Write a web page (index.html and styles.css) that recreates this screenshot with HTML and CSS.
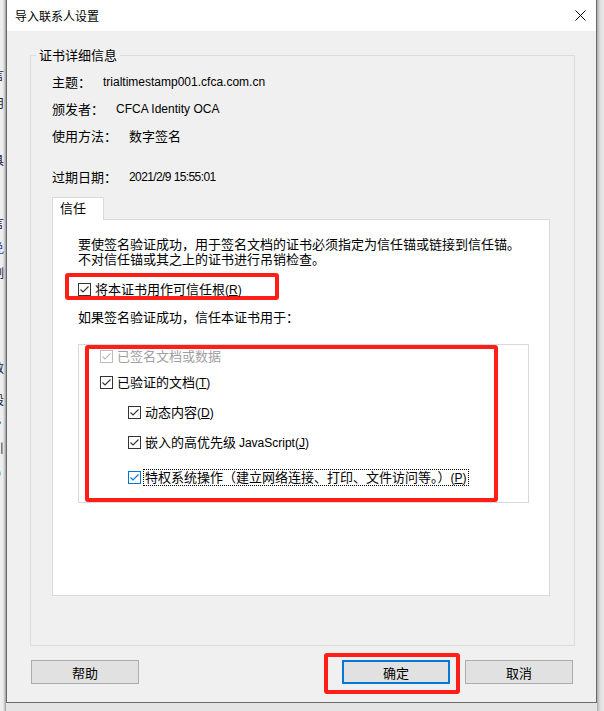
FILE: index.html
```html
<!DOCTYPE html>
<html lang="zh-CN">
<head>
<meta charset="utf-8">
<title>导入联系人设置</title>
<link rel="stylesheet" href="styles.css">
</head>
<body>
<div class="screen">
  <div class="bg-left">
    <div class="frags">
      <div class="fr">言</div><div class="fr">用</div><div class="fr">具</div><div class="fr">言</div>
      <div class="fr blue">兑</div><div class="fr">制</div><div class="fr">E</div><div class="fr">E</div>
      <div class="fr">数</div><div class="fr">段</div><div class="fr blue">J,</div><div class="fr">C</div>
      <div class="fr">引</div><div class="fr">O</div>
    </div>
  </div>
  <div class="dialog">
    <div class="titlebar">
      <span class="title">导入联系人设置</span>
      <svg class="close" width="11" height="11" viewBox="0 0 11 11"><path d="M0.5 0.5 L10.5 10.5 M10.5 0.5 L0.5 10.5" stroke="#000" stroke-width="1" fill="none"/></svg>
    </div>
    <div class="body">
      <fieldset class="group">
        <legend>证书详细信息</legend>
        <div class="group-inner">
          <div class="info"><span class="k">主题：</span><span class="v en">trialtimestamp001.cfca.com.cn</span></div>
          <div class="info"><span class="k">颁发者：</span><span class="v en">CFCA Identity OCA</span></div>
          <div class="info"><span class="k">使用方法：</span><span class="v">数字签名</span></div>
          <div class="info exp"><span class="k">过期日期：</span><span class="v en date">2021/2/9 15:55:01</span></div>
          <div class="tabs"><div class="tab">信任</div></div>
          <div class="panel">
            <p class="desc">要使签名验证成功，用于签名文档的证书必须指定为信任锚或链接到信任锚。<br>不对信任锚或其之上的证书进行吊销检查。</p>
            <div class="redbox rb1">
              <div class="item">
                <svg class="cbx" width="13" height="13" viewBox="0 0 13 13"><rect x="0.5" y="0.5" width="12" height="12" fill="#fff" stroke="#333"/><path d="M2.5 6.5 L5 9 L10.5 3.5" fill="none" stroke="#333" stroke-width="1.1"/></svg>
                <span>将本证书用作可信任根<span class="en">(<u>R</u>)</span></span>
              </div>
            </div>
            <p class="q">如果签名验证成功，信任本证书用于：</p>
            <div class="list">
              <div class="redbox rb2">
                <div class="item i1 disabled">
                  <svg class="cbx" width="13" height="13" viewBox="0 0 13 13"><rect x="0.5" y="0.5" width="12" height="12" fill="#fff" stroke="#bcbcbc"/><path d="M2.5 6.5 L5 9 L10.5 3.5" fill="none" stroke="#bcbcbc" stroke-width="1.1"/></svg>
                  <span>已签名文档或数据</span>
                </div>
                <div class="item i2">
                  <svg class="cbx" width="13" height="13" viewBox="0 0 13 13"><rect x="0.5" y="0.5" width="12" height="12" fill="#fff" stroke="#333"/><path d="M2.5 6.5 L5 9 L10.5 3.5" fill="none" stroke="#333" stroke-width="1.1"/></svg>
                  <span>已验证的文档<span class="en">(<u>T</u>)</span></span>
                </div>
                <div class="item i3">
                  <svg class="cbx" width="13" height="13" viewBox="0 0 13 13"><rect x="0.5" y="0.5" width="12" height="12" fill="#fff" stroke="#333"/><path d="M2.5 6.5 L5 9 L10.5 3.5" fill="none" stroke="#333" stroke-width="1.1"/></svg>
                  <span>动态内容<span class="en">(<u>D</u>)</span></span>
                </div>
                <div class="item i4">
                  <svg class="cbx" width="13" height="13" viewBox="0 0 13 13"><rect x="0.5" y="0.5" width="12" height="12" fill="#fff" stroke="#333"/><path d="M2.5 6.5 L5 9 L10.5 3.5" fill="none" stroke="#333" stroke-width="1.1"/></svg>
                  <span>嵌入的高优先级 <span class="en">JavaScript(<u>J</u>)</span></span>
                </div>
                <div class="item i5">
                  <svg class="cbx" width="13" height="13" viewBox="0 0 13 13"><rect x="0.5" y="0.5" width="12" height="12" fill="#fff" stroke="#0078d7"/><path d="M2.5 6.5 L5 9 L10.5 3.5" fill="none" stroke="#0078d7" stroke-width="1.1"/></svg>
                  <span class="focus">特权系统操作（建立网络连接、打印、文件访问等。）<span class="en">(<u>P</u>)</span></span>
                </div>
              </div>
            </div>
          </div>
        </div>
      </fieldset>
      <div class="buttons">
        <div class="btn help">帮助</div>
        <div class="redbox rb3"><div class="btn primary">确定</div></div>
        <div class="btn cancel">取消</div>
      </div>
    </div>
  </div>
  <div class="bg-right"></div>
</div>
</body>
</html>
```

FILE: styles.css
```css
* { box-sizing: border-box; }
html, body { margin: 0; padding: 0; }
body {
  width: 604px;
  height: 711px;
  overflow: hidden;
  background: #e4e4e4;
  font-family: "Noto Sans CJK SC", sans-serif;
  font-size: 13px;
  color: #000;
}
.en { font-family: "Liberation Sans", "Noto Sans CJK SC", sans-serif; font-size: 12px; }
.date { font-size: 12px; letter-spacing: -0.6px; }
.screen { display: flex; align-items: flex-start; height: 711px; }

.bg-left {
  width: 6px;
  height: 711px;
  flex: none;
  overflow: hidden;
  background: linear-gradient(to right, #efefef 0, #ececec 3px, #bdbdbd 5px, #9a9a9a 6px);
}
.frags { width: 14px; margin-left: -8px; }
.fr { height: 12px; line-height: 12px; font-size: 12px; color: #1c1c3c; overflow: hidden; }
.fr.blue { color: #2340a0; }
.fr:nth-child(1) { margin-top: 69px; }
.fr:nth-child(2) { margin-top: 16px; }
.fr:nth-child(3) { margin-top: 45px; }
.fr:nth-child(4) { margin-top: 51px; }
.fr:nth-child(5) { margin-top: 13px; }
.fr:nth-child(6) { margin-top: 13px; }
.fr:nth-child(7) { margin-top: 5px; }
.fr:nth-child(8) { margin-top: 1px; }
.fr:nth-child(9) { margin-top: 53px; }
.fr:nth-child(10) { margin-top: 20px; }
.fr:nth-child(11) { margin-top: 6px; }
.fr:nth-child(12) { margin-top: 1px; }
.fr:nth-child(13) { margin-top: 5px; }
.fr:nth-child(14) { margin-top: 13px; }

.bg-right {
  flex: 1;
  height: 711px;
  background: linear-gradient(to right, #a8a8a8 0, #d0d0d0 2px, #e2e2e2 4px, #e8e8e8 7px);
}

.dialog {
  width: 591px;
  height: 703px;
  flex: none;
  border: 1px solid #6a6a6a;
  border-top: none;
  background: #f0f0f0;
  display: flex;
  flex-direction: column;
}
.titlebar {
  height: 31px;
  flex: none;
  background: #fff;
  display: flex;
  align-items: center;
  justify-content: space-between;
  padding: 0 10px 0 8px;
  font-size: 12px;
}
.close { display: block; }

.body { padding: 16px 21px 0 23px; display: flex; flex-direction: column; }
.group {
  margin: 0;
  padding: 0;
  min-width: 0;
  border: 1px solid #dcdcdc;
}
.group legend {
  margin-left: 5px;
  padding: 0 3px;
  line-height: 16px;
  font-size: 13px;
}
.group-inner { padding: 11px 24px 49px 21px; }
.info { display: flex; align-items: center; height: 16px; line-height: 16px; }
.info + .info { margin-top: 11px; }
.info.exp { margin-top: 25px; }
.info .v { margin-left: 12px; }

.tabs { display: flex; margin-top: 12px; }
.tab {
  position: relative;
  z-index: 1;
  width: 52px;
  height: 23px;
  margin-bottom: -1px;
  padding-left: 7px;
  line-height: 20px;
  background: #fff;
  border: 1px solid #d9d9d9;
  border-bottom: none;
}
.panel {
  height: 377px;
  background: #fff;
  border: 1px solid #d9d9d9;
  padding: 16px 0 0 25px;
}
.desc { margin: 0; line-height: 15px; }
.q { margin: 9px 0 0; line-height: 16px; }

.redbox { border: 4px solid #ff1f17; border-radius: 3px; }
.rb1 { width: 214px; height: 27px; margin: 7px 0 0 -13px; padding: 4px 0 0 9px; }
.list {
  margin-top: 19px;
  width: 451px;
  height: 159px;
  border: 1px solid #d9d9d9;
}
.rb2 { margin-left: 6px; width: 413px; height: 157px; padding-left: 11px; }

.item { display: flex; align-items: center; gap: 4px; height: 16px; line-height: 16px; white-space: nowrap; }
.cbx { display: block; flex: none; }
.i1 { margin-top: -1px; }
.i2 { margin-top: 10px; }
.i3 { margin-top: 14px; margin-left: 28px; }
.i4 { margin-top: 14px; margin-left: 28px; }
.i5 { margin-top: 19px; margin-left: 28px; }
.disabled { color: #a0a0a0; }
.focus { border: 1px dotted #000; line-height: 14px; padding: 0 1px; margin-left: -2px; }
u { text-underline-offset: 1px; }

.buttons { display: flex; align-items: flex-start; margin-top: 7px; padding: 0 2px 0 1px; }
.btn {
  width: 108px;
  height: 24px;
  display: flex;
  align-items: center;
  justify-content: center;
  background: #e1e1e1;
  border: 1px solid #adadad;
  font-size: 13px;
}
.help { margin-top: 7px; }
.rb3 { margin-left: auto; width: 136px; height: 41px; padding: 3px 6px 6px 14px; }
.primary { border: 2px solid #0078d7; }
.cancel { margin-top: 7px; margin-left: 5px; }
```
